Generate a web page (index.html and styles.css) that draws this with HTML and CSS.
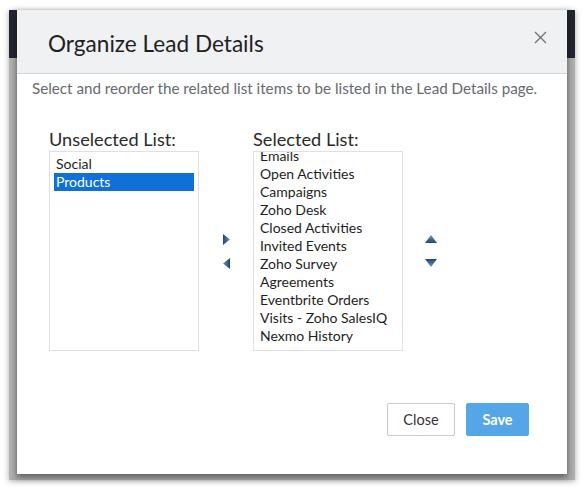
FILE: index.html
```html
<!DOCTYPE html>
<html>
<head>
<meta charset="utf-8">
<link rel="stylesheet" href="styles.css">
</head>
<body>
<div class="frame">
  <div class="page-header"></div>
  <div class="page-rest"></div>
  <div class="modal">
    <div class="modal-header">
      <h1 class="modal-title">Organize Lead Details</h1>
      <svg class="close-x" width="13" height="13" viewBox="0 0 13 13"><path d="M1 1 L12 12 M12 1 L1 12" stroke="#6b6e73" stroke-width="1.2" fill="none"/></svg>
    </div>
    <div class="modal-body">
      <p class="intro">Select and reorder the related list items to be listed in the Lead Details page.</p>
      <div class="lists">
        <div class="list-label">Unselected List:</div>
        <div></div>
        <div class="list-label">Selected List:</div>
        <div></div>
        <div class="list-box">
          <div class="item">Social</div>
          <div class="item selected">Products</div>
        </div>
        <div class="move-col">
          <svg width="7" height="11" viewBox="0 0 7 11"><defs><linearGradient id="gr" x1="0" y1="0" x2="1" y2="0"><stop offset="0" stop-color="#1c4676"/><stop offset="1" stop-color="#6a92bb"/></linearGradient></defs><path d="M0 0 L7 5.5 L0 11 Z" fill="url(#gr)"/></svg>
          <svg width="7" height="11" viewBox="0 0 7 11"><defs><linearGradient id="gl" x1="0" y1="0" x2="1" y2="0"><stop offset="0" stop-color="#6a92bb"/><stop offset="1" stop-color="#1c4676"/></linearGradient></defs><path d="M7 0 L0 5.5 L7 11 Z" fill="url(#gl)"/></svg>
        </div>
        <div class="list-box">
          <div class="item first-scrolled">Emails</div>
          <div class="item">Open Activities</div>
          <div class="item">Campaigns</div>
          <div class="item">Zoho Desk</div>
          <div class="item">Closed Activities</div>
          <div class="item">Invited Events</div>
          <div class="item">Zoho Survey</div>
          <div class="item">Agreements</div>
          <div class="item">Eventbrite Orders</div>
          <div class="item">Visits - Zoho SalesIQ</div>
          <div class="item">Nexmo History</div>
        </div>
        <div class="order-col">
          <svg width="12" height="8" viewBox="0 0 12 8"><defs><linearGradient id="gu" x1="0" y1="0" x2="0" y2="1"><stop offset="0" stop-color="#7096bd"/><stop offset="1" stop-color="#1c4676"/></linearGradient></defs><path d="M6 0 L12 8 L0 8 Z" fill="url(#gu)"/></svg>
          <svg width="12" height="8" viewBox="0 0 12 8"><defs><linearGradient id="gd" x1="0" y1="0" x2="0" y2="1"><stop offset="0" stop-color="#1c4676"/><stop offset="1" stop-color="#7096bd"/></linearGradient></defs><path d="M0 0 L12 0 L6 8 Z" fill="url(#gd)"/></svg>
        </div>
      </div>
      <div class="footer">
        <button class="btn btn-close">Close</button>
        <button class="btn btn-save">Save</button>
      </div>
    </div>
  </div>
</div>
</body>
</html>
```
FILE: styles.css
```css
html, body {
  margin: 0;
  padding: 0;
  background: #ffffff;
}
body {
  width: 583px;
  height: 491px;
  overflow: hidden;
  font-family: Lato, "Liberation Sans", sans-serif;
}
.frame {
  position: relative;
  margin: 10px 8px 0 9px;
  height: 470px;
  background: #a9a9a9;
  box-shadow: 0 1px 6px rgba(0,0,0,0.35);
  display: flex;
  flex-direction: column;
}
.page-header {
  height: 48px;
  background: #23262e;
}
.page-rest {
  flex: 1;
  background: linear-gradient(to right, #b3b3b3, #a6a6a6 8px, #a6a6a6 558px, #b0b0b0);
}
.modal {
  position: absolute;
  left: 8px;
  top: 0;
  width: 550px;
  height: 464px;
  background: #ffffff;
  box-shadow: 0 3px 6px rgba(0,0,0,0.45);
  display: flex;
  flex-direction: column;
}
.modal-header {
  height: 63px;
  background: #f0f1f3;
  border-bottom: 1px solid #d3d6da;
  display: flex;
  align-items: center;
  justify-content: space-between;
  padding: 0 20px 0 31px;
}
.modal-title {
  margin: 0;
  font-size: 22.6px;
  font-weight: 400;
  color: #1f1f1f;
  padding-top: 4px;
}
.close-x {
  margin-top: -8px;
}
.modal-body {
  flex: 1;
  padding: 4px 38px 0 15px;
  display: flex;
  flex-direction: column;
}
.intro {
  margin: 0;
  font-size: 15.2px;
  line-height: 20px;
  color: #666a70;
  white-space: nowrap;
}
.lists {
  margin-top: 31px;
  margin-left: 17px;
  display: grid;
  grid-template-columns: 150px 54px 150px 55px;
  grid-template-rows: 22px 200px;
}
.list-label {
  font-size: 18.2px;
  line-height: 20px;
  color: #2a2a2a;
  white-space: nowrap;
}
.list-box {
  box-sizing: border-box;
  border: 1px solid #dde1e7;
  padding: 3px 4px;
  overflow: hidden;
}
.item {
  font-size: 14px;
  line-height: 18px;
  height: 18px;
  padding: 0 2px;
  color: #1e1e1e;
  white-space: nowrap;
}
.list-box .item.first-scrolled {
  margin-top: -8px;
}
.item.selected {
  background: #1170d7;
  color: #ffffff;
}
.move-col, .order-col {
  display: flex;
  flex-direction: column;
  align-items: center;
  justify-content: center;
  gap: 13px;
}
.order-col {
  gap: 16px;
}
.footer {
  margin-top: 52px;
  display: flex;
  justify-content: flex-end;
  gap: 11px;
}
.btn {
  height: 33px;
  font-family: Lato, "Liberation Sans", sans-serif;
  font-size: 14.5px;
  border-radius: 2px;
  cursor: pointer;
}
.btn-close {
  width: 68px;
  background: #ffffff;
  border: 1px solid #c9c9c9;
  color: #333333;
}
.btn-save {
  width: 63px;
  background: #55a6e9;
  border: 1px solid #55a6e9;
  color: #ffffff;
  font-weight: 700;
}
```
